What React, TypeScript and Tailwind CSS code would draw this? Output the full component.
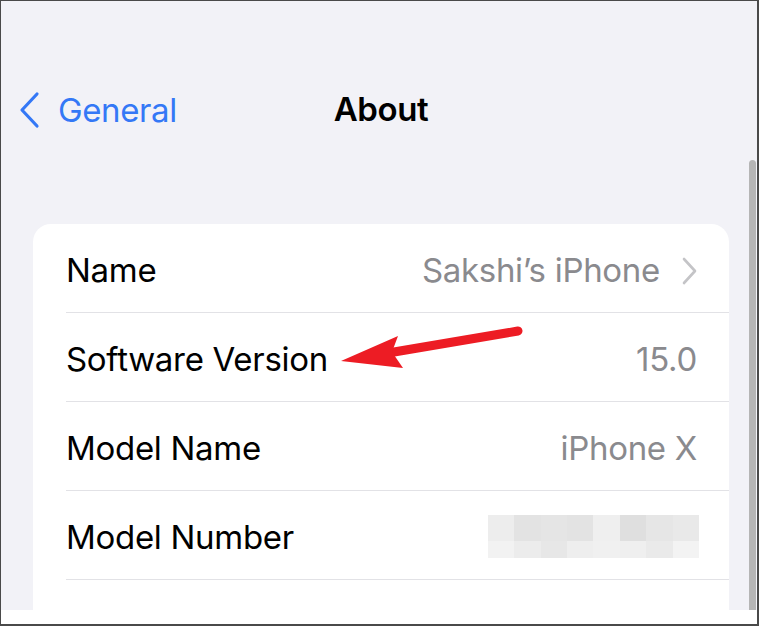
import React from "react";

const font = { fontFamily: "Inter, 'Noto Sans', 'Liberation Sans', sans-serif" };

// blurred model number, two rows of grey squares
const topRow = ["#ededed", "#e3e3e3", "#e5e5e5", "#e3e3e3", "#efefef", "#dfdfdf", "#e6e6e6", "#e9e9e9"];
const bottomRow = ["#f2f2f2", "#ececec", "#e7e7e7", "#eeeeee", "#f0f0f0", "#efefef", "#eaeaea", "#f3f3f3"];

function Pixelated() {
    return (
        <div className="flex flex-col">
            <div className="flex h-[26px]">
                {topRow.map((c, i) => (
                    <div key={i} className="w-[26.4px]" style={{ background: c }} />
                ))}
            </div>
            <div className="flex h-[17px]">
                {bottomRow.map((c, i) => (
                    <div key={i} className="w-[26.4px]" style={{ background: c }} />
                ))}
            </div>
        </div>
    );
}

function Row({ label, children }: { label?: string; children?: React.ReactNode }) {
    return (
        <div className="pl-[33px]">
            <div className="flex h-[89px] items-center justify-between border-b border-[#e2e2e6] pr-[32px]">
                <span className="pt-[5px] text-[33px] tracking-[-0.3px] text-black">{label}</span>
                {children}
            </div>
        </div>
    );
}

export default function App() {
    return (
        <div
            className="relative flex h-[626px] w-[759px] flex-col overflow-hidden border-t border-l border-r-2 border-b-2 border-[#4a4a4a] bg-white"
            style={font}
        >
            <div className="relative h-[609px] overflow-hidden bg-[#f2f2f7]">
                {/* nav bar */}
                <div className="h-[223px] pt-[76px]">
                    <div className="grid h-[66px] grid-cols-[1fr_auto_1fr] items-center">
                        <div className="flex items-center pl-[17px]">
                            <svg width="22" height="38" viewBox="0 0 22 38" className="mr-[18px]">
                                <path d="M19 3 L4 19 L19 35" fill="none" stroke="#3478f6" strokeWidth="3.2" strokeLinecap="round" strokeLinejoin="round" />
                            </svg>
                            <span className="pt-[2px] text-[33px] tracking-[-0.4px] text-[#3478f6]">General</span>
                        </div>
                        <span className="ml-[4px] text-[33px] font-semibold tracking-[-0.4px] text-black">About</span>
                        <div />
                    </div>
                </div>

                {/* settings card */}
                <div className="ml-[32px] w-[696px] rounded-t-[18px] bg-white">
                    <Row label="Name">
                        <div className="flex items-center pt-[5px]">
                            <span className="text-[33px] tracking-[-0.3px] text-[#8a8a8e]">Sakshi’s iPhone</span>
                            <svg width="18" height="28" viewBox="0 0 18 28" className="ml-[21px] mr-[-2px]">
                                <path d="M3 2 L14 14 L3 26" fill="none" stroke="#c4c4c7" strokeWidth="2.6" strokeLinecap="round" strokeLinejoin="round" />
                            </svg>
                        </div>
                    </Row>
                    <Row label="Software Version">
                        <span className="pt-[5px] text-[33px] tracking-[-0.3px] text-[#8a8a8e]">15.0</span>
                    </Row>
                    <Row label="Model Name">
                        <span className="pt-[5px] text-[33px] tracking-[-0.3px] text-[#8a8a8e]">iPhone X</span>
                    </Row>
                    <Row label="Model Number">
                        <div className="mr-[-2px] mt-[3px]">
                            <Pixelated />
                        </div>
                    </Row>
                    <Row />
                </div>

                {/* scroll indicator */}
                <div className="absolute right-[1px] top-[159px] bottom-0 w-[7px] rounded-t-full bg-[#b5b5b5]" />
            </div>

            {/* annotation arrow */}
            <svg className="absolute left-[-1px] top-[-1px]" width="759" height="626" viewBox="0 0 759 626">
                <line x1="394" y1="352" x2="518" y2="331" stroke="#ed1c24" strokeWidth="9" strokeLinecap="round" />
                <polygon points="341,361 398,336 392,352 403,368" fill="#ed1c24" />
            </svg>
        </div>
    );
}
